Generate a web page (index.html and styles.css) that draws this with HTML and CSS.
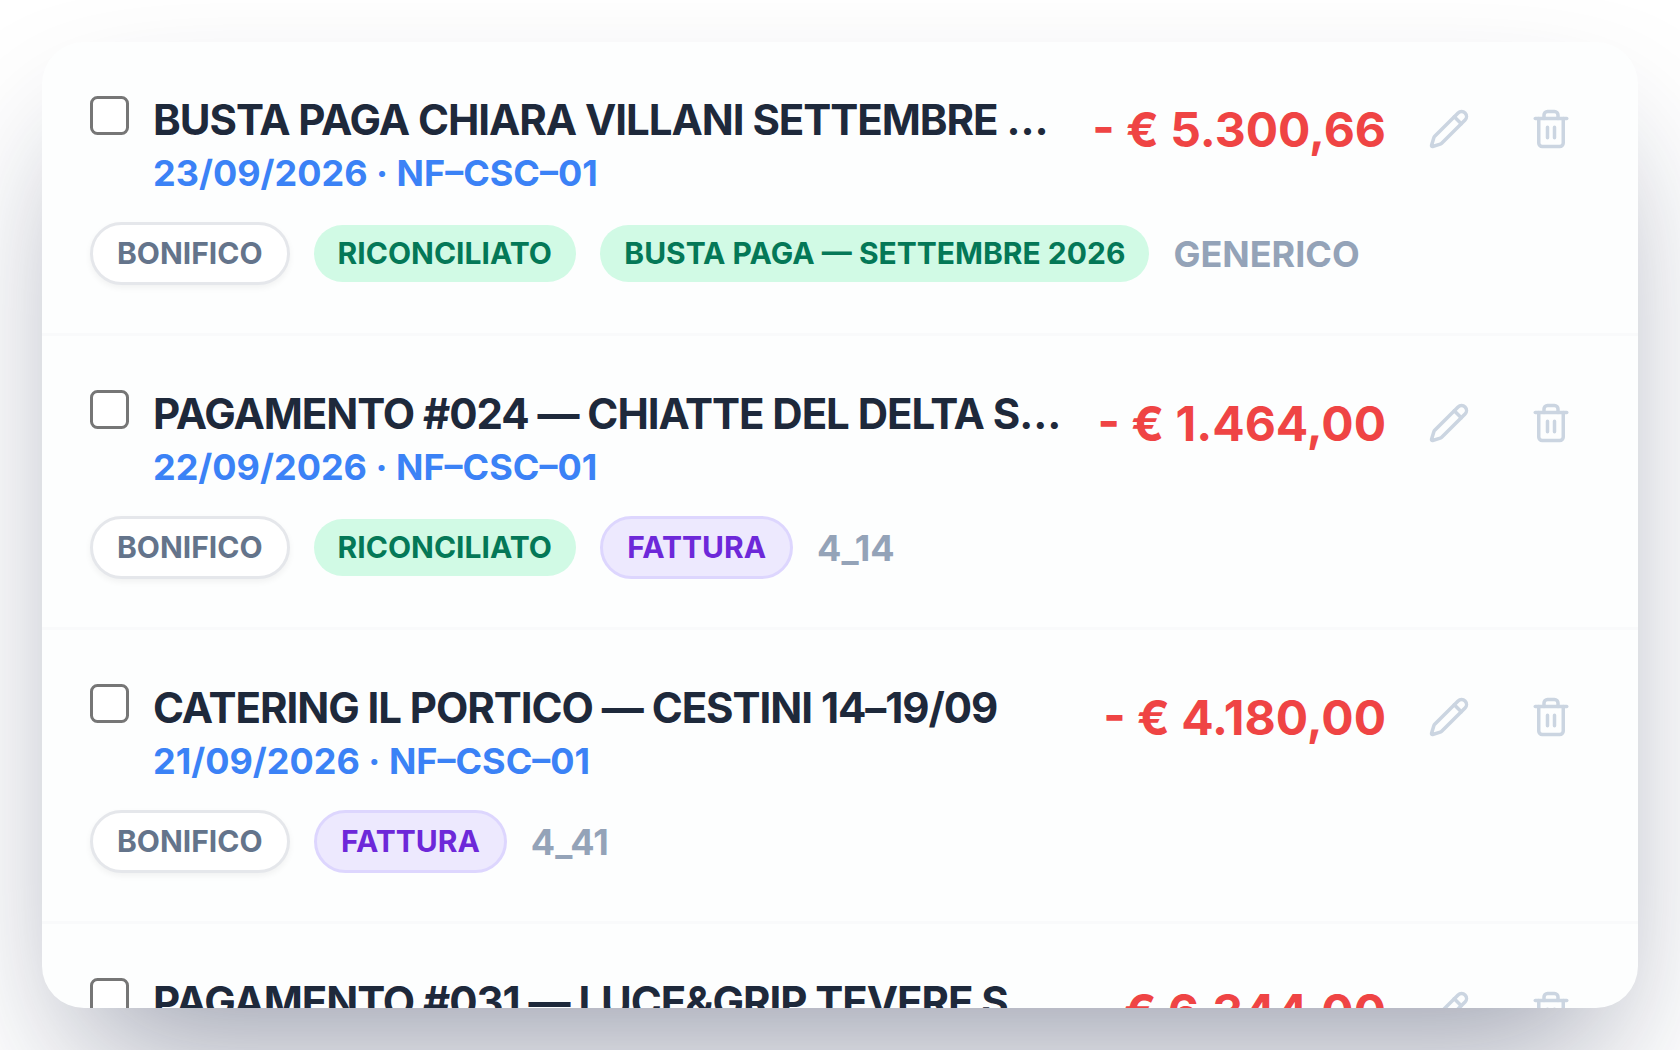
FILE: index.html
```html
<!DOCTYPE html>
<html lang="it">
<head>
<meta charset="UTF-8">
<meta name="viewport" content="width=device-width, initial-scale=1.0">
<title>Movimenti</title>
<link rel="stylesheet" href="styles.css">
</head>
<body>

<svg class="sprite" width="0" height="0">
  <symbol id="i-pencil" viewBox="0 0 24 24">
    <path d="M21.174 6.812a1 1 0 0 0-3.986-3.987L3.842 16.174a2 2 0 0 0-.5.83l-1.321 4.352a.5.5 0 0 0 .623.622l4.353-1.32a2 2 0 0 0 .83-.497z"/>
    <path d="m15 5 4 4"/>
  </symbol>
  <symbol id="i-trash" viewBox="0 0 24 24">
    <path d="M3 6h18"/>
    <path d="M19 6v14a2 2 0 0 1-2 2H7a2 2 0 0 1-2-2V6"/>
    <path d="M8 6V4a2 2 0 0 1 2-2h4a2 2 0 0 1 2 2v2"/>
    <path d="M10 11v6M14 11v6"/>
  </symbol>
</svg>

<div class="card">
  <div class="row">
    <div class="row-top">
      <input type="checkbox" class="check">
      <div class="info">
        <div class="title">BUSTA PAGA CHIARA VILLANI SETTEMBRE 2026</div>
        <div class="meta">23/09/2026 · NF–CSC–01</div>
      </div>
      <div class="amount">- € 5.300,66</div>
      <button class="ibtn" title="Modifica"><svg><use href="#i-pencil"/></svg></button>
      <button class="ibtn" title="Elimina"><svg><use href="#i-trash"/></svg></button>
    </div>
    <div class="tags">
      <span class="tag tag-plain">BONIFICO</span>
      <span class="tag tag-ok">RICONCILIATO</span>
      <span class="tag tag-ok tag-wide">BUSTA PAGA — SETTEMBRE 2026</span>
      <span class="cat">GENERICO</span>
    </div>
  </div>

  <div class="row">
    <div class="row-top">
      <input type="checkbox" class="check">
      <div class="info">
        <div class="title">PAGAMENTO #024 — CHIATTE DEL DELTA S.R.L.</div>
        <div class="meta">22/09/2026 · NF–CSC–01</div>
      </div>
      <div class="amount">- € 1.464,00</div>
      <button class="ibtn" title="Modifica"><svg><use href="#i-pencil"/></svg></button>
      <button class="ibtn" title="Elimina"><svg><use href="#i-trash"/></svg></button>
    </div>
    <div class="tags">
      <span class="tag tag-plain">BONIFICO</span>
      <span class="tag tag-ok">RICONCILIATO</span>
      <span class="tag tag-doc">FATTURA</span>
      <span class="cat">4_14</span>
    </div>
  </div>

  <div class="row">
    <div class="row-top">
      <input type="checkbox" class="check">
      <div class="info">
        <div class="title">CATERING IL PORTICO — CESTINI 14–19/09</div>
        <div class="meta">21/09/2026 · NF–CSC–01</div>
      </div>
      <div class="amount">- € 4.180,00</div>
      <button class="ibtn" title="Modifica"><svg><use href="#i-pencil"/></svg></button>
      <button class="ibtn" title="Elimina"><svg><use href="#i-trash"/></svg></button>
    </div>
    <div class="tags">
      <span class="tag tag-plain">BONIFICO</span>
      <span class="tag tag-doc">FATTURA</span>
      <span class="cat">4_41</span>
    </div>
  </div>

  <div class="row">
    <div class="row-top">
      <input type="checkbox" class="check">
      <div class="info">
        <div class="title">PAGAMENTO #031 — LUCE&amp;GRIP TEVERE S.R.L.</div>
      </div>
      <div class="amount">- € 6.344,00</div>
      <button class="ibtn" title="Modifica"><svg><use href="#i-pencil"/></svg></button>
      <button class="ibtn" title="Elimina"><svg><use href="#i-trash"/></svg></button>
    </div>
  </div>
</div>

</body>
</html>
```
FILE: styles.css
```css
*, *::before, *::after { box-sizing: border-box; margin: 0; padding: 0; }
body {
  background: #fff;
  height: 100vh;
  padding: 42px;
  overflow: hidden;
  font-family: Inter, sans-serif;
  font-weight: 700;
}
.sprite { display: none; }

.card {
  height: 966px;
  background: #fdfefe;
  border-radius: 42px;
  overflow: hidden;
  box-shadow: 0 75px 150px -36px rgba(15, 23, 60, 0.42);
}

.row {
  height: 294px;
  padding: 48px;
  border-bottom: 3px solid #f9fafb;
  display: flex;
  flex-direction: column;
  gap: 24px;
}
.row-top { display: flex; align-items: flex-start; gap: 24px; height: 108px; }

.check {
  appearance: none;
  -webkit-appearance: none;
  width: 39px; height: 39px;
  margin-top: 6px;
  flex-shrink: 0;
  background: #fff;
  border: 3px solid #767676;
  border-radius: 7.5px;
}

.info { flex: 1; min-width: 0; }
.title {
  font-size: 42px;
  line-height: 60px;
  letter-spacing: -0.025em;
  color: #1e293b;
  white-space: nowrap;
  overflow: hidden;
  text-overflow: ellipsis;
}
.meta { font-size: 36px; line-height: 46px; color: #3b82f6; }

.amount {
  font-size: 48px;
  line-height: 80px;
  color: #ef4444;
  white-space: nowrap;
}

.ibtn {
  width: 78px; height: 78px;
  padding: 18px;
  flex-shrink: 0;
  border: none;
  background: none;
  color: #cbd5e1;
  cursor: pointer;
}
.ibtn svg {
  display: block;
  width: 42px; height: 42px;
  fill: none;
  stroke: currentColor;
  stroke-width: 2;
  stroke-linecap: round;
  stroke-linejoin: round;
}

.tags { display: flex; align-items: center; gap: 24px; height: 63px; }
.tag {
  font-size: 30px;
  line-height: 45px;
  padding: 6px 24px;
  border-radius: 999px;
  white-space: nowrap;
}
.tag-plain {
  padding-right: 24.5px;
  color: #64748b;
  background: #fff;
  border: 3px solid #e5e7eb;
  box-shadow: 0 3px 6px rgba(0, 0, 0, 0.05);
}
.tag-ok { color: #047857; background: #d1fae5; padding: 6px 24.5px 6px 23.5px; }
.tag-wide { padding: 6px 24px; }
.tag-doc { color: #6d28d9; background: #ede9fe; border: 3px solid #ddd6fe; }
.cat { font-size: 36px; line-height: 48px; color: #94a3b8; }
```
